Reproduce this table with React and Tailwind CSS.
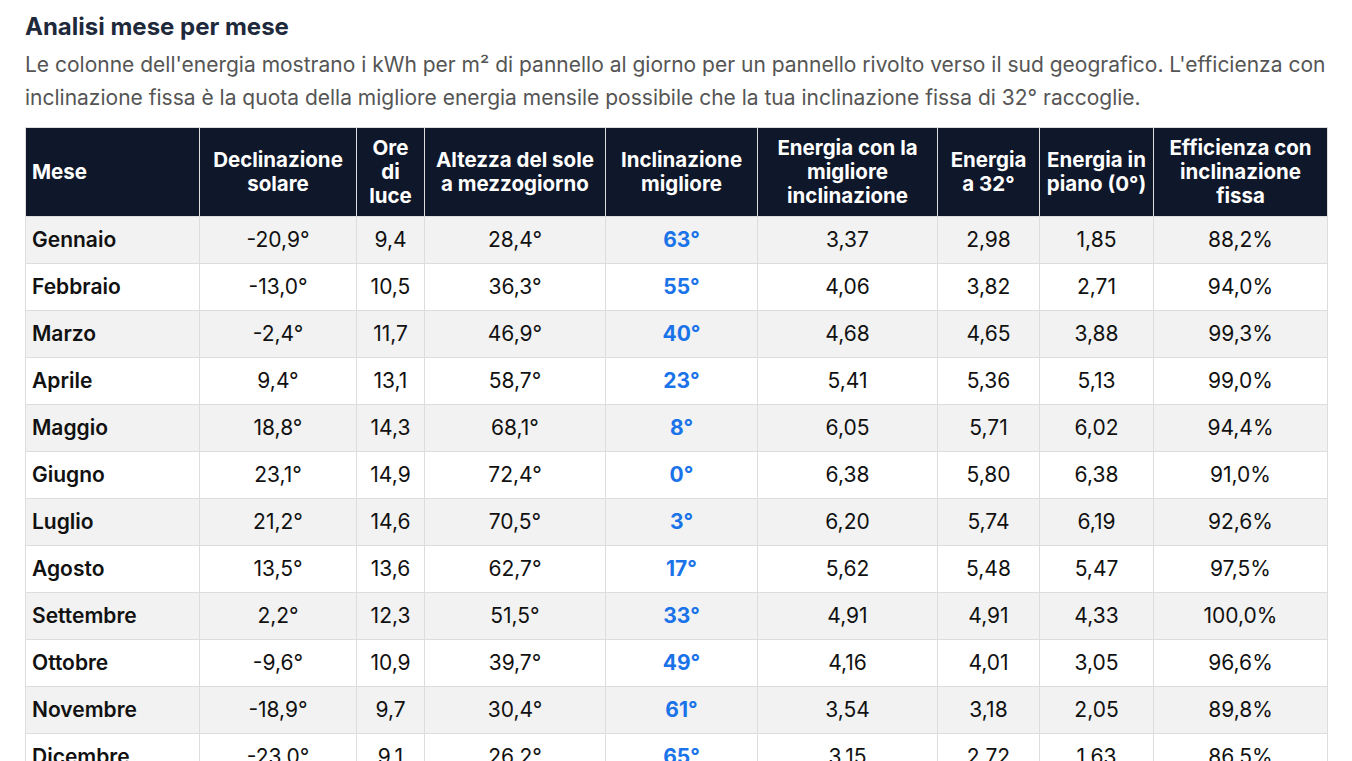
import React from 'react';

const rows = [
  ['Gennaio', '-20,9°', '9,4', '28,4°', '63°', '3,37', '2,98', '1,85', '88,2%'],
  ['Febbraio', '-13,0°', '10,5', '36,3°', '55°', '4,06', '3,82', '2,71', '94,0%'],
  ['Marzo', '-2,4°', '11,7', '46,9°', '40°', '4,68', '4,65', '3,88', '99,3%'],
  ['Aprile', '9,4°', '13,1', '58,7°', '23°', '5,41', '5,36', '5,13', '99,0%'],
  ['Maggio', '18,8°', '14,3', '68,1°', '8°', '6,05', '5,71', '6,02', '94,4%'],
  ['Giugno', '23,1°', '14,9', '72,4°', '0°', '6,38', '5,80', '6,38', '91,0%'],
  ['Luglio', '21,2°', '14,6', '70,5°', '3°', '6,20', '5,74', '6,19', '92,6%'],
  ['Agosto', '13,5°', '13,6', '62,7°', '17°', '5,62', '5,48', '5,47', '97,5%'],
  ['Settembre', '2,2°', '12,3', '51,5°', '33°', '4,91', '4,91', '4,33', '100,0%'],
  ['Ottobre', '-9,6°', '10,9', '39,7°', '49°', '4,16', '4,01', '3,05', '96,6%'],
  ['Novembre', '-18,9°', '9,7', '30,4°', '61°', '3,54', '3,18', '2,05', '89,8%'],
  ['Dicembre', '-23,0°', '9,1', '26,2°', '65°', '3,15', '2,72', '1,63', '86,5%'],
];

const cols = [174, 157, 68, 181, 152, 180, 102, 114, 174];

const headers = [
  'Mese',
  'Declinazione solare',
  'Ore di luce',
  'Altezza del sole a mezzogiorno',
  'Inclinazione migliore',
  'Energia con la migliore inclinazione',
  'Energia a 32°',
  'Energia in piano (0°)',
  'Efficienza con inclinazione fissa',
];

const App = () => {
  return (
    <div className="bg-white min-h-screen px-[25px] pt-[12px] font-['Inter',sans-serif] text-[#111]">
      <h2 className="text-[24px] font-bold leading-[30px] text-[#1e293b]">Analisi mese per mese</h2>
      <p className="mt-[6px] text-[21px] leading-[33px] text-[#555]">
        Le colonne dell'energia mostrano i kWh per m² di pannello al giorno per un pannello rivolto verso il sud geografico. L'efficienza con inclinazione fissa è la quota della migliore energia mensile possibile che la tua inclinazione fissa di 32° raccoglie.
      </p>
      <table className="mt-[13px] w-[1302px] table-fixed border-collapse border border-[#ddd] text-[21px]">
        <colgroup>
          {cols.map((w, i) => <col key={i} style={{ width: w }} />)}
        </colgroup>
        <thead>
          <tr className="bg-[#0f172a] text-white">
            {headers.map((h, i) => (
              <th
                key={h}
                className={
                  i === 0
                    ? 'border border-[#ddd] px-[6px] h-[89px] text-left font-bold text-[20.5px] leading-[24px]'
                    : i === 7
                    ? 'border border-[#ddd] px-[3px] h-[89px] text-center font-bold text-[20.5px] leading-[24px]'
                    : 'border border-[#ddd] px-[7px] h-[89px] text-center font-bold text-[20.5px] leading-[24px]'
                }
              >
                {h}
              </th>
            ))}
          </tr>
        </thead>
        <tbody>
          {rows.map((r, i) => (
            <tr key={r[0]} className={i % 2 === 0 ? 'bg-[#f2f2f2]' : 'bg-white'}>
              {r.map((c, j) => (
                <td
                  key={j}
                  className={
                    j === 0
                      ? 'border border-[#ddd] px-[6px] h-[47px] text-left font-semibold'
                      : j === 4
                      ? 'border border-[#ddd] px-[6px] h-[47px] text-center font-bold text-[#1a73e8]'
                      : 'border border-[#ddd] px-[6px] h-[47px] text-center'
                  }
                >
                  {c}
                </td>
              ))}
            </tr>
          ))}
        </tbody>
      </table>
    </div>
  );
};

export default App;
